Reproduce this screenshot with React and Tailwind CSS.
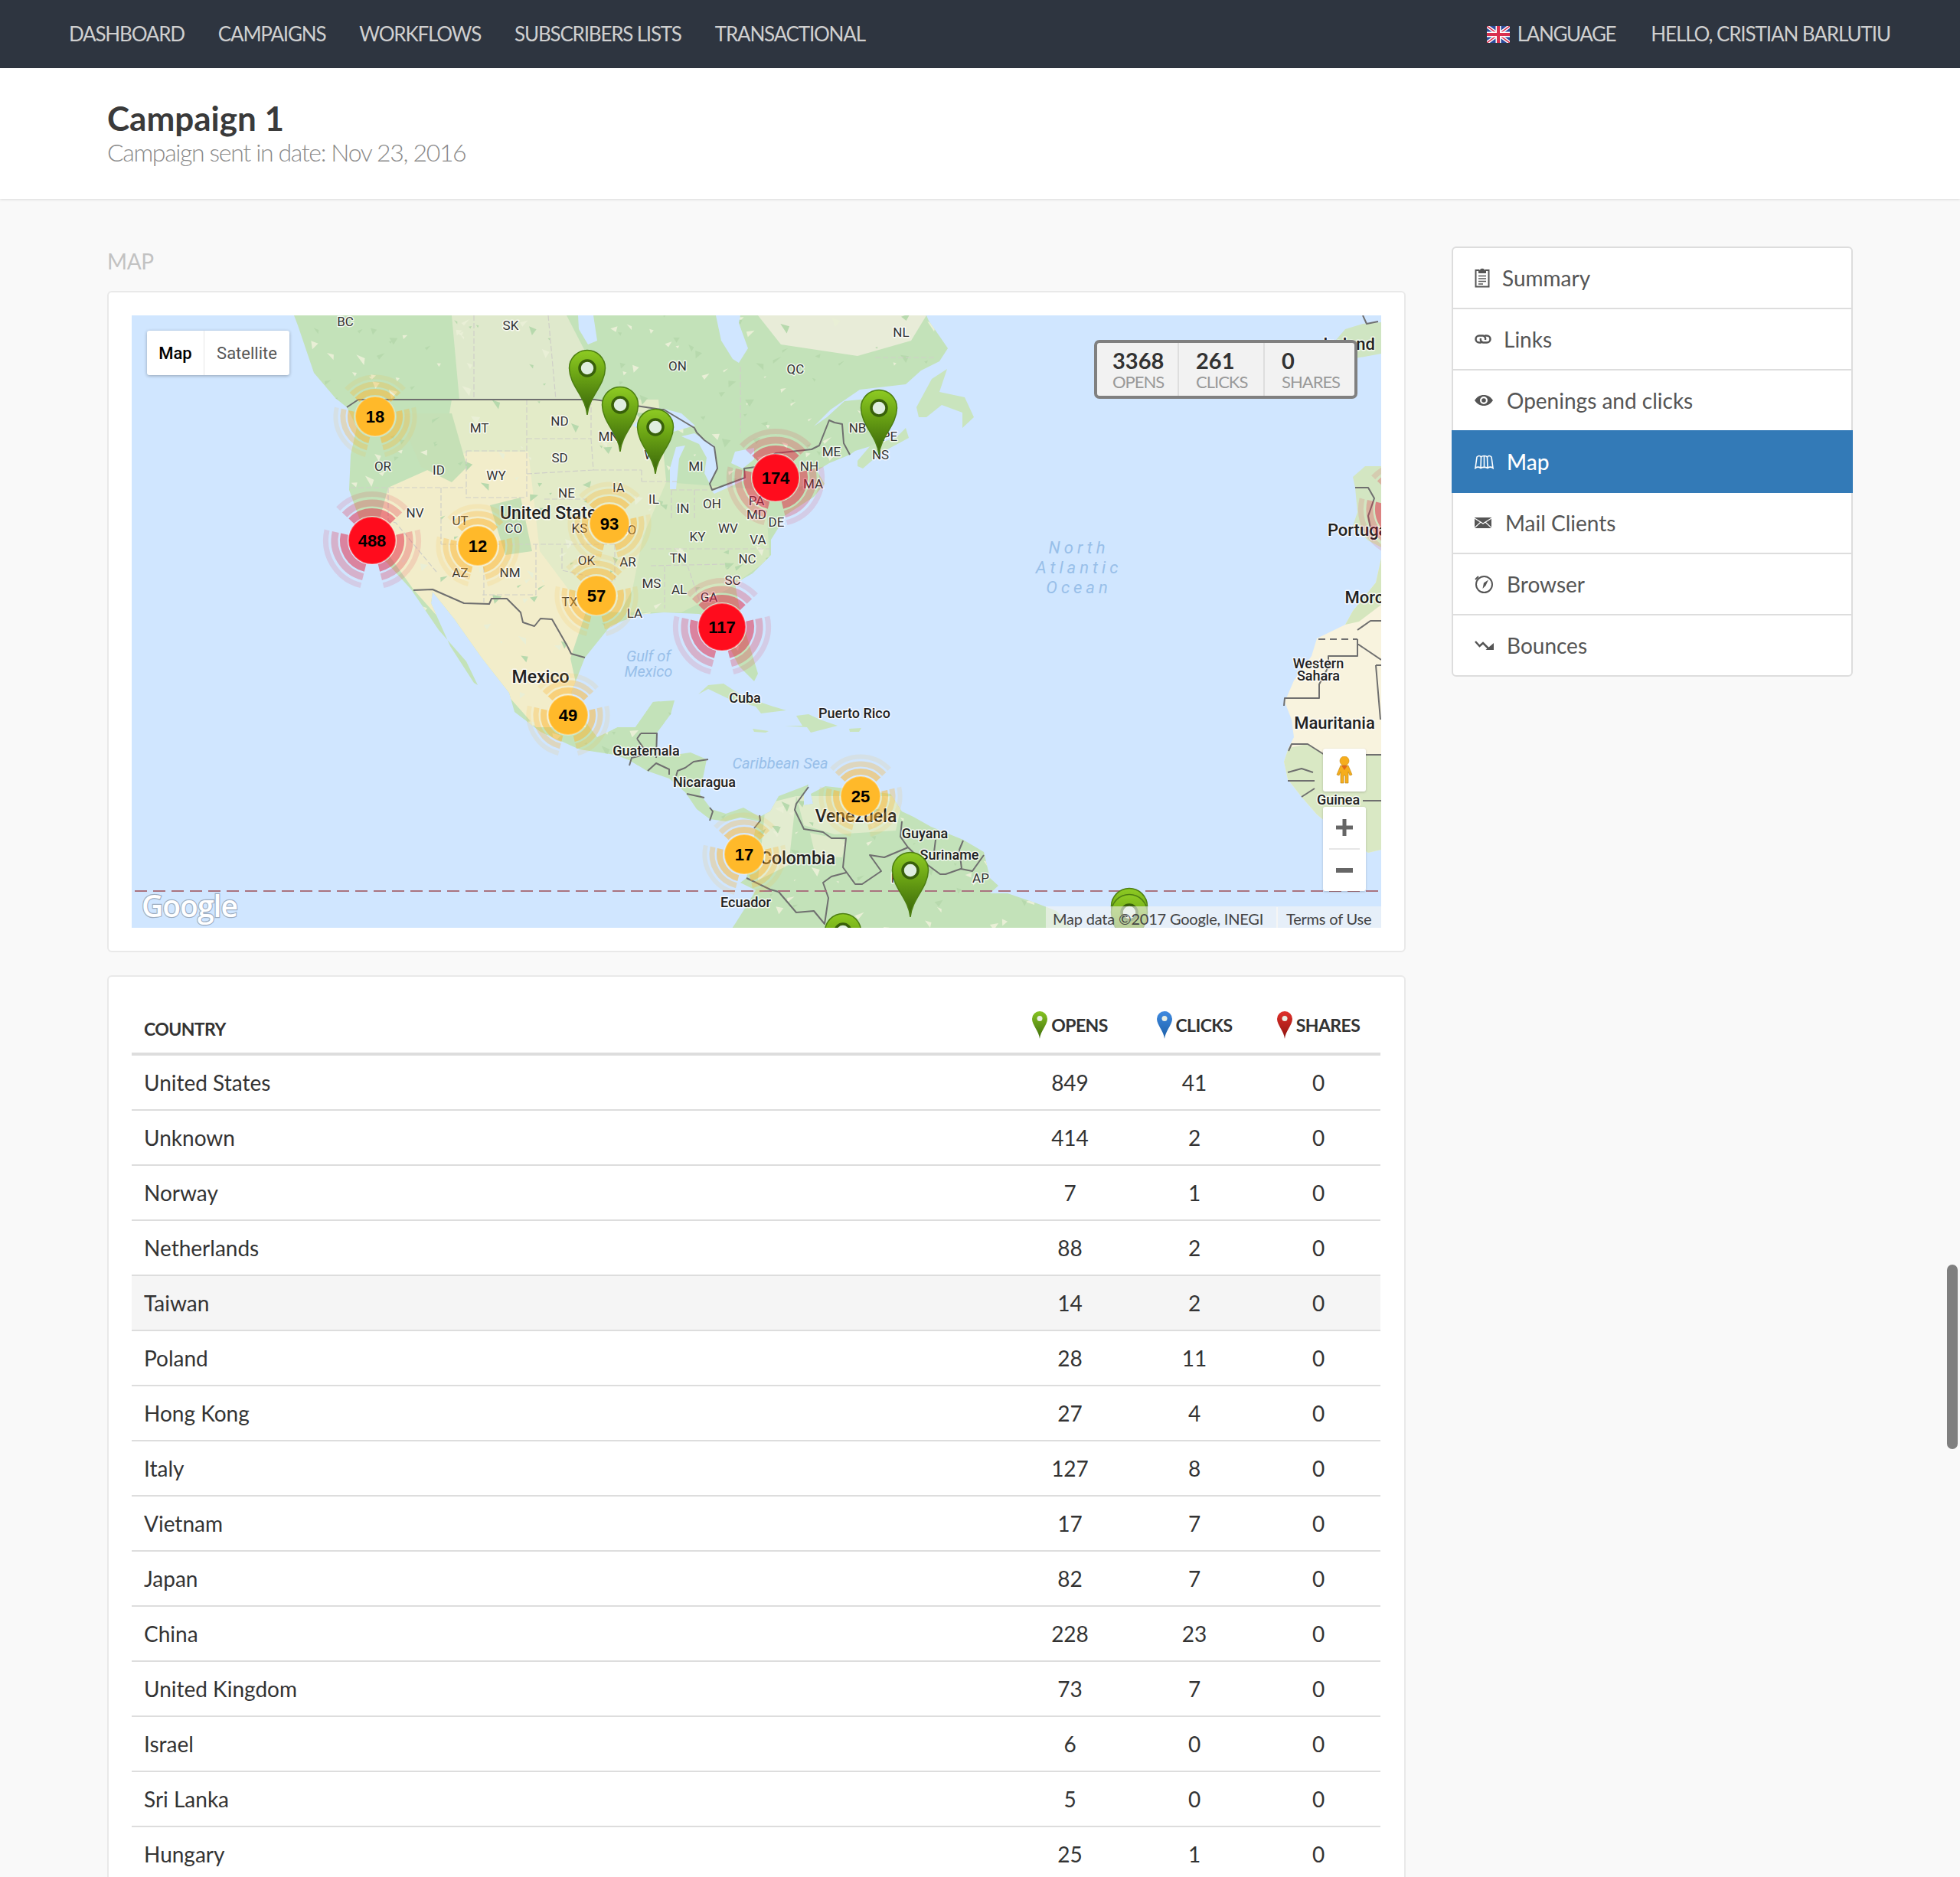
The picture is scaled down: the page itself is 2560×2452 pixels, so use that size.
const NAV = ["DASHBOARD", "CAMPAIGNS", "WORKFLOWS", "SUBSCRIBERS LISTS", "TRANSACTIONAL"]

const ROWS = [
  ["United States", 849, 41, 0],
  ["Unknown", 414, 2, 0],
  ["Norway", 7, 1, 0],
  ["Netherlands", 88, 2, 0],
  ["Taiwan", 14, 2, 0],
  ["Poland", 28, 11, 0],
  ["Hong Kong", 27, 4, 0],
  ["Italy", 127, 8, 0],
  ["Vietnam", 17, 7, 0],
  ["Japan", 82, 7, 0],
  ["China", 228, 23, 0],
  ["United Kingdom", 73, 7, 0],
  ["Israel", 6, 0, 0],
  ["Sri Lanka", 5, 0, 0],
  ["Hungary", 25, 1, 0],
]

// map shapes are in page pixels, the svg viewBox starts at the map's corner
const LAND =
  "M384 412 389 425 410 487 438 520 453 532 466 558 458 594 456 640 476 696 497 726 537 770 573 823 609 864 624 895 619 892 588 844 563 788 565 773 593 808 629 859 665 905 672 930 706 956 757 979 803 986 822 993 845 1007 874 1017 895 1035 910 1057 927 1070 948 1073 967 1068 992 1073 987 1080 982 1110 975 1147 967 1153 987 1163 979 1177 960 1207 956 1213 1400 1213 1380 1190 1354 1180 1316 1167 1293 1167 1304 1157 1293 1147 1285 1113 1258 1097 1216 1080 1193 1067 1178 1060 1163 1037 1105 1030 1078 1027 1059 1037 1062 1050 1050 1052 1050 1036 1056 1025 1017 1040 1006 1060 992 1067 971 1055 948 1063 929 1057 914 1037 923 992 902 983 868 988 858 983 858 957 876 933 881 915 853 917 837 940 830 950 807 950 780 963 767 946 746 905 764 859 797 818 833 803 867 800 913 802 930 810 950 840 965 870 985 890 990 880 975 830 965 790 960 762 983 749 1007 725 1007 705 1017 689 1023 675 1043 662 1063 649 1077 632 1067 615 1083 605 1110 594 1117 589 1150 579 1160 559 1170 535 1143 520 1103 524 1080 545 1063 557 1085 535 1123 509 1183 502 1203 484 1227 472 1238 455 1227 439 1213 419 1210 412Z"
const ISLANDS = [
  "M1120 609 1127 612 1150 592 1187 572 1183 559 1170 572 1137 582 1120 602Z",
  "M1197 532 1217 495 1237 482 1227 512 1260 519 1272 545 1257 559 1257 539 1230 529 1210 545 1200 545Z",
  "M912 907 925 895 945 893 971 910 1010 923 1027 928 994 932 987 923 952 913 925 900Z",
  "M1040 935 1056 933 1071 940 1094 948 1059 957 1054 950 1025 948 1048 948Z",
  "M983 952 1004 955 1000 957 985 956Z",
  "M1109 952 1125 951 1122 956 1110 956Z",
]
const AFRICA =
  "M1804 729 1797 761 1767 798 1757 816 1720 834 1713 857 1690 889 1678 917 1687 940 1690 963 1683 977 1677 995 1682 1018 1700 1041 1720 1064 1753 1091 1787 1114 1804 1110Z"
const IBERIA = "M1767 623 1783 609 1804 609 1804 715 1787 706 1767 687 1773 669 1770 637Z"
const IRELAND = "M1757 430 1780 423 1804 421 1804 462 1760 470 1740 450Z"
const WATER = [
  "M935 412 942 445 957 469 965 474 977 455 965 422 967 412Z",
  "M755 412 775 412 780 445 768 450 756 430Z",
  "M826 556 850 533 867 534 890 540 908 556 893 560 873 566 850 567Z",
  "M883 584 895 582 887 599 883 639 875 639 875 612Z",
  "M907 566 933 582 937 612 927 632 920 618 923 598 913 580 890 570Z",
  "M930 642 973 622 975 626 933 645Z",
  "M960 590 985 585 985 600 970 612 955 605Z",
]
const PATCHES = [
  ["#dfe9cc", "M590 412 740 412 770 470 760 522 600 522Z"],
  ["#e8ecd8", "M990 412 1210 412 1190 445 1120 465 1020 450Z"],
  ["#e3ebc8", "M590 522 860 522 875 680 810 800 640 790 560 700Z"],
  ["#f2edca", "M507 637 612 590 690 590 705 720 765 800 745 860 765 950 700 950 620 860 540 770 490 700Z"],
  ["#d3e7bf", "M870 630 1000 640 1005 730 950 770 890 800 820 800 840 700Z"],
  ["#c5e0b6", "M520 540 590 540 610 610 590 630 550 610Z"],
  ["#c5e0b6", "M640 660 680 650 695 720 660 725Z"],
  ["#c3e2b9", "M800 950 860 910 880 1000 820 1000Z"],
  ["#dfebcb", "M1040 1040 1180 1040 1170 1085 1090 1090 1050 1078Z"],
  ["#dfeaca", "M1058 1088 1105 1098 1100 1120 1065 1118Z"],
  ["#e3ecd0", "M1000 1050 1040 1040 1030 1130 990 1150Z"],
]
const BORDERS = [
  "M453 532 468 522H777L864 535 867 535 907 559 910 565 920 575 933 584 937 612 927 632 930 640 973 624 972 612 987 610 1013 592 1060 587 1070 582 1083 549 1090 552 1100 554 1102 579 1110 594",
  "M540 771 565 770 606 788 639 789 642 782 662 782 680 800 683 813 698 818 706 808 721 809 741 844 746 854 764 859",
  "M1056 1028 1040 1050 1038 1058 1050 1083 1075 1087 1086 1095 1105 1095 1101 1133 1117 1155 1126 1155 1151 1138 1136 1117 1155 1120 1186 1107 1176 1093 1178 1073",
  "M1186 1107 1205 1125 1228 1142 1235 1142 1255 1135 1270 1138 1285 1117",
  "M1222 1097 1220 1113M1258 1098 1253 1110 1256 1135",
  "M975 1147 1006 1162 1017 1165 1040 1192 1063 1190 1077 1207 1082 1173 1075 1153 1086 1145 1105 1140",
  "M837 958 858 958 857 990M832 965 837 958M832 965 846 985 825 990 822 1000M846 1007 857 997 874 1005 874 1012",
  "M925 992 906 995 895 1003 885 1007 883 1014M897 1037 920 1042M927 1055 931 1060 927 1072M992 1065 993 1072 985 1082",
  "M1773 823 1790 811 1804 811M1773 835V857H1735V871L1723 894V912H1678L1677 922M1773 841 1804 862M1797 869H1804M1797 869 1803 940",
  "M1683 981 1687 972H1708L1730 986H1804M1682 1009 1700 1004 1715 1009M1682 1020H1717M1700 1041 1717 1030M1780 1046 1804 1046",
  "M1770 637 1787 637 1795 651 1787 674 1793 706",
  "M1780 412 1785 423 1800 420",
]
const STATES = [
  "M619 412V522M716 412 726 522M967 479V569M1143 467H1223",
  "M688 522V650M688 573H772M688 619 775 614M609 589H688M609 589V650H688M711 652H767",
  "M576 711H803M632 711V787M576 637V711M458 637H609M507 637V680L517 683 570 747",
  "M700 711V777L630 777M734 716V745L800 760M775 614H838M838 629H884M838 614V629",
  "M877 640V680M907 640V679M877 640H925M850 717H1010M868 740V795M898 739 915 789M850 739 947 737",
  "M772 522V573M772 573 775 614M803 711V760",
]

const STATE_LABELS = [
  ["BC", 451, 420], ["SK", 667, 425], ["ON", 885, 478], ["MT", 626, 559], ["ND", 731, 550], ["MN", 795, 570],
  ["SD", 731, 598], ["WI", 851, 594], ["OR", 500, 609], ["ID", 573, 614], ["WY", 648, 621], ["MI", 909, 609],
  ["NE", 740, 644], ["IA", 808, 637], ["IL", 854, 652], ["IN", 892, 664], ["OH", 930, 658], ["NV", 542, 670],
  ["UT", 601, 680], ["CO", 671, 690], ["KS", 757, 690], ["MO", 818, 692], ["KY", 911, 701], ["WV", 951, 690],
  ["VA", 990, 705], ["OK", 766, 732], ["AR", 820, 734], ["TN", 886, 729], ["NC", 976, 730], ["AZ", 601, 748],
  ["NM", 666, 748], ["MS", 851, 762], ["AL", 887, 770], ["SC", 957, 758], ["GA", 926, 780], ["TX", 744, 786],
  ["LA", 829, 801], ["NL", 1177, 434], ["QC", 1039, 482], ["NB", 1120, 559], ["PE", 1162, 570], ["NS", 1150, 594],
  ["ME", 1086, 590], ["NH", 1057, 609], ["MA", 1062, 632], ["PA", 988, 654], ["MD", 988, 672], ["DE", 1014, 682],
  ["AP", 1281, 1147], ["PA", 1174, 1147],
]
const COUNTRY_LABELS = [
  ["Mexico", 706, 884, 23], ["Guatemala", 844, 981, 18], ["Nicaragua", 920, 1022, 18], ["Cuba", 973, 912, 18],
  ["Puerto Rico", 1116, 932, 18], ["Venezuela", 1118, 1066, 23], ["Guyana", 1208, 1089, 18], ["Suriname", 1240, 1117, 18],
  ["Colombia", 1042, 1121, 23], ["Ecuador", 974, 1179, 18], ["Western", 1722, 867, 18], ["Sahara", 1722, 883, 18],
  ["Mauritania", 1743, 944, 22], ["Guinea", 1748, 1045, 18], ["United States", 722, 670, 23],
  ["Portugal", 1776, 692, 22], ["Morocco", 1800, 780, 22], ["Ireland", 1762, 449, 22],
]
const WATER_LABELS = [
  ["Gulf of", 847, 857, 20, 0], ["Mexico", 847, 877, 20, 0], ["Caribbean Sea", 1019, 997, 20, 0],
  ["North", 1409, 716, 22, 5], ["Atlantic", 1409, 742, 22, 5], ["Ocean", 1409, 768, 22, 5],
]

const CLUSTERS = [
  ["18", 490, 544], ["488", 486, 706], ["12", 624, 713], ["93", 796, 684], ["57", 779, 778],
  ["49", 742, 934], ["174", 1013, 624], ["117", 943, 819], ["25", 1124, 1040], ["17", 972, 1116],
]
const BIG = ["488", "174", "117"]

const PINS = [[1475, 1245], [1475, 1253], [767, 542], [810, 590], [856, 619], [1148, 594], [1189, 1198], [1101, 1278]]

// a little terrain noise, clipped to the land shapes
function makeSpecks() {
  let seed = 7
  const next = () => {
    seed = (seed * 16807) % 2147483647
    return seed / 2147483647
  }
  const out = []
  for (let i = 0; i < 700; i++) {
    const x = 400 + next() * 1000
    const y = 412 + next() * 800
    const s = 3 + next() * 9
    const pale = next() > 0.45
    out.push({
      d: `M${x} ${y} l${s} ${next() * s - s / 2} l${-next() * s} ${s * 0.8}Z`,
      fill: pale ? "#e9efd6" : "#b7d9ad",
    })
  }
  return out
}
const SPECKS = makeSpecks()

function polar(cx, cy, r, deg) {
  const a = (deg * Math.PI) / 180
  return [cx + r * Math.cos(a), cy + r * Math.sin(a)]
}

function arc(cx, cy, r, a0, a1) {
  const [x0, y0] = polar(cx, cy, r, a0)
  const [x1, y1] = polar(cx, cy, r, a1)
  return `M${x0} ${y0} A${r} ${r} 0 0 1 ${x1} ${y1}`
}

function Rings({ x, y, big }) {
  const sets = big
    ? [[37, 10, 0.5], [49, 9, 0.27], [60.5, 7, 0.13]]
    : [[32, 8, 0.5], [42, 7, 0.3], [51.5, 6, 0.12]]
  const color = big ? "#e4203f" : "#fdb42a"
  return (
    <g fill="none" stroke={color}>
      {sets.map(([r, w, o]) =>
        [[223, 317], [104, 193], [-13, 76]].map(([a0, a1]) => (
          <path key={`${r}${a0}`} d={arc(x, y, r, a0, a1)} strokeWidth={w} strokeOpacity={o} />
        ))
      )}
    </g>
  )
}

function Cluster({ label, x, y }) {
  const big = BIG.includes(label)
  return (
    <g>
      <Rings x={x} y={y} big={big} />
      <circle cx={x} cy={y} r={big ? 31 : 26} fill={big ? "#ff0c1d" : "#ffb92a"} stroke="#fff" strokeOpacity="0.3" strokeWidth="2" />
      <text x={x} y={y + 8} textAnchor="middle" fontFamily="Liberation Sans, sans-serif" fontWeight="700" fontSize="22" fill="#000">
        {label}
      </text>
    </g>
  )
}

function MapPin({ x, y }) {
  return (
    <g transform={`translate(${x} ${y})`}>
      <path
        d="M0 0C-2-24-23-38-23.500-61A23.500 23.500 0 1 1 23.500-61C23-38 2-24 0 0Z"
        fill="url(#pinGreen)"
        stroke="#4d7f12"
        strokeWidth="1.5"
      />
      <circle cx="0" cy="-61" r="10" fill="#dfeee0" stroke="#38600a" strokeWidth="3.5" />
    </g>
  )
}

function WorldMap() {
  const halo = { stroke: "#fff", strokeOpacity: 0.75, strokeWidth: 3, paintOrder: "stroke", strokeLinejoin: "round" }
  return (
    <svg viewBox="172 412 1632 800" className="block w-[1632px] h-[800px] bg-[#d0e6ff]">
      <defs>
        <linearGradient id="pinGreen" x1="0" y1="0" x2="0" y2="1">
          <stop offset="0" stopColor="#8ecb23" />
          <stop offset="0.4" stopColor="#6aa314" />
          <stop offset="1" stopColor="#37620a" />
        </linearGradient>
        <clipPath id="landClip">
          <path d={LAND} />
        </clipPath>
      </defs>

      <path d={LAND} fill="#c3e2b9" />
      {ISLANDS.map((d, i) => (
        <path key={i} d={d} fill="#c9e4bd" />
      ))}
      <path d={AFRICA} fill="#f8f3de" />
      <path d="M1683 977 1708 972 1730 986 1804 985V1110L1787 1114 1753 1091 1720 1064 1700 1041 1682 1018 1677 995Z" fill="#d9e8c4" />
      <path d="M1804 729 1797 761 1767 798 1757 816 1775 812 1804 790Z" fill="#d5e6be" />
      <path d={IBERIA} fill="#d3e6c2" />
      <path d={IRELAND} fill="#cfe5c2" />

      <g clipPath="url(#landClip)">
        {PATCHES.map(([fill, d], i) => (
          <path key={i} d={d} fill={fill} />
        ))}
        {SPECKS.map((s, i) => (
          <path key={i} d={s.d} fill={s.fill} />
        ))}
      </g>
      {WATER.map((d, i) => (
        <path key={i} d={d} fill="#d0e6ff" />
      ))}

      <path d={STATES.join("")} fill="none" stroke="#cfcfc8" strokeWidth="1.2" strokeDasharray="7 3" />
      <path d={BORDERS.join("")} fill="none" stroke="#6f6f6f" strokeWidth="2" strokeLinejoin="round" />
      <path d="M1722 835H1773" fill="none" stroke="#6f6f6f" strokeWidth="2" strokeDasharray="9 6" />
      <path d="M176 1164H1804" fill="none" stroke="#a9737f" strokeWidth="2" strokeDasharray="16 8" />

      <g fontFamily="Roboto, sans-serif" textAnchor="middle">
        {STATE_LABELS.map(([t, x, y], i) => (
          <text key={i} x={x} y={y + 6} fontSize="17" fill="#333" {...halo}>
            {t}
          </text>
        ))}
        {COUNTRY_LABELS.map(([t, x, y, size], i) => (
          <text key={i} x={x} y={y + size * 0.36} fontSize={size} fontWeight="500" fill="#222" {...halo}>
            {t}
          </text>
        ))}
        {WATER_LABELS.map(([t, x, y, size, sp], i) => (
          <text key={i} x={x} y={y + 7} fontSize={size} fontStyle="italic" letterSpacing={sp} fill="#98bfe9">
            {t}
          </text>
        ))}
      </g>

      <Rings x={1838} y={665} big />
      {CLUSTERS.map(([label, x, y]) => (
        <Cluster key={label} label={label} x={x} y={y} />
      ))}
      {PINS.map(([x, y], i) => (
        <MapPin key={i} x={x} y={y} />
      ))}

      <text
        x="185"
        y="1198"
        fontFamily="Open Sans, sans-serif"
        fontSize="39"
        fontWeight="600"
        fill="#fff"
        stroke="#000"
        strokeOpacity="0.25"
        strokeWidth="2.5"
        paintOrder="stroke"
        letterSpacing="-1"
      >
        Google
      </text>
    </svg>
  )
}

function StatCell({ value, label, className }) {
  return (
    <div className={className}>
      <div className="text-[29px] leading-[32px] font-bold text-[#333]">{value}</div>
      <div className="text-[22px] leading-[24px] text-[#999] tracking-[-1px]">{label}</div>
    </div>
  )
}

function MapPanel() {
  return (
    <div className="relative w-[1632px] h-[800px] overflow-hidden">
      <WorldMap />
      <div className="absolute left-5 top-5 flex w-[186px] h-[58px] bg-white rounded-[3px] shadow-[0_1px_4px_rgba(0,0,0,0.3)] font-[Roboto,sans-serif] text-[22px]">
        <div className="w-[75px] flex items-center justify-center font-medium text-black border-r border-[#e6e6e6]">Map</div>
        <div className="flex-1 flex items-center justify-center text-[#565656]">Satellite</div>
      </div>
      <div className="absolute left-[1257px] top-8 w-[344px] h-[77px] flex bg-[#f2f2f2] border-4 border-[#808080] rounded-[7px]">
        <StatCell value="3368" label="OPENS" className="w-[107px] pl-5 pt-[7px] border-r-2 border-[#dedede]" />
        <StatCell value="261" label="CLICKS" className="w-[112px] pl-[22px] pt-[7px] border-r-2 border-[#dedede]" />
        <StatCell value="0" label="SHARES" className="flex-1 pl-[22px] pt-[7px]" />
      </div>
      <div className="absolute left-[1556px] top-[566px] w-14 h-14 bg-white rounded-[3px] flex items-center justify-center shadow-[0_1px_3px_rgba(0,0,0,0.2)]">
        <svg width="22" height="36" viewBox="0 0 22 36">
          <circle cx="11" cy="6" r="6" fill="#f6ad1c" stroke="#c98a10" strokeWidth="0.6" />
          <path d="M6 12H16L21 24 18 25 16 20V35H12V25H10V35H6V20L4 25 1 24Z" fill="#f6ad1c" stroke="#b8820e" strokeWidth="0.6" />
          <path d="M7 12H15L11 18Z" fill="#e06a1a" />
        </svg>
      </div>
      <div className="absolute left-[1556px] top-[642px] w-14 h-[110px] bg-white rounded-[3px] flex flex-col items-center shadow-[0_1px_3px_rgba(0,0,0,0.2)]">
        <div className="h-[54px] flex items-center justify-center">
          <svg width="22" height="22" viewBox="0 0 22 22"><path d="M8.5 0h5v8.500h8.500v5h-8.500v8.500h-5v-8.500h-8.500v-5h8.500z" fill="#666" /></svg>
        </div>
        <div className="w-10 h-[2px] bg-[#e6e6e6]" />
        <div className="flex-1 flex items-center justify-center">
          <svg width="22" height="6" viewBox="0 0 22 6"><rect width="22" height="6" fill="#666" /></svg>
        </div>
      </div>
      <div className="absolute right-0 bottom-0 w-[438px] h-[28px] pt-[3px] bg-[#f5f5f5]/60 flex items-center text-[20px] text-[#444] tracking-[-0.2px]">
        <span className="pl-[9px] w-[301px] whitespace-nowrap">Map data ©2017 Google, INEGI</span>
        <span className="pl-[11px] whitespace-nowrap border-l-2 border-[#f5f5f5]">Terms of Use</span>
      </div>
    </div>
  )
}

function SmallPin({ top, bottom }) {
  const id = `pin${top.slice(1)}`
  return (
    <svg width="20" height="36" viewBox="0 0 20 36" className="shrink-0">
      <defs>
        <linearGradient id={id} x1="0" y1="0" x2="0" y2="1">
          <stop offset="0" stopColor={top} />
          <stop offset="1" stopColor={bottom} />
        </linearGradient>
      </defs>
      <path d="M10 36C9 26 0 18 0 10A10 10 0 1 1 20 10C20 18 11 26 10 36Z" fill={`url(#${id})`} />
      <circle cx="10" cy="9.500" r="3.500" fill="#e9efe5" />
    </svg>
  )
}

function HeadCell({ label, top, bottom }) {
  return (
    <th className="align-bottom pb-[18px] font-bold">
      <div className="flex items-center justify-center gap-[5px] text-[23px] leading-[36px] text-[#333] tracking-[-0.6px]">
        <SmallPin top={top} bottom={bottom} />
        {label}
      </div>
    </th>
  )
}

function CountryTable() {
  return (
    <table className="w-[1631px] table-fixed border-collapse text-[#333]">
      <colgroup>
        <col />
        <col className="w-[163px]" />
        <col className="w-[162px]" />
        <col className="w-[162px]" />
      </colgroup>
      <thead>
        <tr className="h-[71px] border-b-4 border-[#ddd]">
          <th className="align-bottom pb-[16px] pl-4 text-left font-bold text-[23px] leading-[30px] tracking-[-0.6px]">COUNTRY</th>
          <HeadCell label="OPENS" top="#86c322" bottom="#3f6d0b" />
          <HeadCell label="CLICKS" top="#3f8ae0" bottom="#1c5fa8" />
          <HeadCell label="SHARES" top="#e0302a" bottom="#8e130f" />
        </tr>
      </thead>
      <tbody className="text-[28px]">
        {ROWS.map(([name, opens, clicks, shares], i) => (
          <tr
            key={name}
            className={`${i === 0 ? "h-[73px]" : "h-[72px]"} border-b-2 border-[#ddd] ${name === "Taiwan" ? "bg-[#f5f5f5]" : ""}`}
          >
            <td className="pl-4">{name}</td>
            <td className="text-center">{opens}</td>
            <td className="text-center">{clicks}</td>
            <td className="text-center">{shares}</td>
          </tr>
        ))}
      </tbody>
    </table>
  )
}

function Flag() {
  return (
    <svg width="30" height="22" viewBox="0 0 30 22" className="mr-[10px]">
      <rect width="30" height="22" fill="#2b4a9b" />
      <path d="M0 0 30 22M30 0 0 22" stroke="#fff" strokeWidth="4.500" />
      <path d="M0 0 30 22M30 0 0 22" stroke="#d9304f" strokeWidth="1.500" />
      <path d="M15 0V22M0 11H30" stroke="#fff" strokeWidth="7" />
      <path d="M15 0V22M0 11H30" stroke="#d9304f" strokeWidth="4" />
    </svg>
  )
}

const iconProps = { fill: "none", stroke: "currentColor", strokeWidth: 2 }
const SIDE_ITEMS = [
  {
    label: "Summary",
    gap: "w-[36px]",
    icon: (
      <svg width="20" height="26" viewBox="0 0 20 26" {...iconProps}>
        <path d="M6 3H1.500V24.500H18.500V3H14" />
        <path d="M6 6V3.500H8C8 1 12 1 12 3.500H14V6Z" fill="currentColor" />
        <path d="M5 10.500H15M5 14H15M5 17.500H15M5 21H11" strokeWidth="1.700" />
      </svg>
    ),
  },
  {
    label: "Links",
    gap: "w-[38px]",
    icon: (
      <svg width="22" height="14" viewBox="0 0 22 14" {...iconProps} strokeWidth="2.500">
        <path d="M9 11.500H6A4.500 4.500 0 0 1 6 2.500H11A4.500 4.500 0 0 1 14 8" />
        <path d="M13 2.500H16A4.500 4.500 0 0 1 16 11.500H11A4.500 4.500 0 0 1 8 6" />
      </svg>
    ),
  },
  {
    label: "Openings and clicks",
    gap: "w-[42px]",
    icon: (
      <svg width="24" height="14" viewBox="0 0 24 14">
        <path fillRule="evenodd" fill="currentColor" d="M0 7C3 2.500 7 0 12 0S21 2.500 24 7C21 11.500 17 14 12 14S3 11.500 0 7ZM12 2A5 5 0 1 0 12 12 5 5 0 0 0 12 2Z" />
        <circle cx="12" cy="7" r="2.800" fill="currentColor" />
      </svg>
    ),
  },
  {
    label: "Map",
    gap: "w-[42px]",
    icon: (
      <svg width="25" height="20" viewBox="0 0 25 20" {...iconProps} strokeWidth="1.600">
        <path d="M1 18.500 3 4C5 2 7 2 8.500 4 10 2 15 2 16.500 4 18 2 20 2 22 4L24 18.500C22 17 19 17 17 18.500 15 17 10 17 8 18.500 6 17 3 17 1 18.500Z" />
        <path d="M8.500 4 8 18.500M16.500 4 17 18.500M12.500 3V18" />
      </svg>
    ),
  },
  {
    label: "Mail Clients",
    gap: "w-[40px]",
    icon: (
      <svg width="22" height="14" viewBox="0 0 22 14">
        <rect width="22" height="14" fill="currentColor" />
        <path d="M0 1 11 8 22 1M0 13.500 8 6M22 13.500 14 6" fill="none" stroke="#fff" strokeWidth="1.200" />
      </svg>
    ),
  },
  {
    label: "Browser",
    gap: "w-[42px]",
    icon: (
      <svg width="25" height="24" viewBox="0 0 25 24" {...iconProps}>
        <circle cx="12.500" cy="12.500" r="10.500" />
        <path d="M1 6 5 2" />
        <path d="M18 6.500 14.500 14 10.500 18 12 10.500Z" fill="currentColor" stroke="none" />
      </svg>
    ),
  },
  {
    label: "Bounces",
    gap: "w-[42px]",
    icon: (
      <svg width="25" height="15" viewBox="0 0 25 15">
        <path d="M1 2 6.500 8 11 4 18 11" fill="none" stroke="currentColor" strokeWidth="2.500" />
        <path d="M14.500 13H25V4Z" fill="currentColor" />
      </svg>
    ),
  },
]

function Sidebar() {
  return (
    <aside className="w-[524px] mt-[62px] self-start border-2 border-[#ddd] rounded-[6px] bg-white flex flex-col">
      {SIDE_ITEMS.map((item, i) => {
        const active = item.label === "Map"
        const last = i === SIDE_ITEMS.length - 1
        return (
          <a
            key={item.label}
            className={`flex items-center text-[28px] ${
              active
                ? "h-[82px] -mt-[2px] bg-[#337ab7] text-white font-medium -mx-[2px] pl-[30px]"
                : `${last ? "h-[78px]" : "h-[80px] border-b-2 border-[#ddd]"} pl-[28px] text-[#555]`
            }`}
          >
            <span className={`${item.gap} flex items-center shrink-0`}>{item.icon}</span>
            {item.label}
          </a>
        )
      })}
    </aside>
  )
}

export default function App() {
  return (
    <div className="relative h-[2452px] w-[2560px] overflow-hidden bg-[#f9f9f9] font-[Lato,sans-serif]">
      <nav className="h-[89px] bg-[#2e3540] flex items-center justify-between pl-[90px] pr-[91px] text-[26px] text-[#d0d0d0]">
        <div className="flex gap-[44px] tracking-[-1.2px]">
          {NAV.map((n) => (
            <a key={n}>{n}</a>
          ))}
        </div>
        <div className="flex items-center gap-[46px] tracking-[-1.1px]">
          <a className="flex items-center tracking-[-1.4px]">
            <Flag />
            LANGUAGE
          </a>
          <a>HELLO, CRISTIAN BARLUTIU</a>
        </div>
      </nav>

      <header className="h-[171px] bg-white pl-[140px] pt-[38px] shadow-[0_1px_3px_rgba(0,0,0,0.12)]">
        <h1 className="text-[44px] leading-[54px] font-bold text-[#3a3a3a]">Campaign 1</h1>
        <p className="text-[32px] leading-[36px] font-light text-[#8a8a8a] tracking-[-1.35px]">Campaign sent in date: Nov 23, 2016</p>
      </header>

      <main className="flex gap-[60px] px-[140px]">
        <div className="w-[1696px] shrink-0">
          <h2 className="pt-[64px] h-[120px] text-[28px] leading-[34px] text-[#c2c2c2] tracking-[-0.3px]">MAP</h2>
          <section className="bg-white border-2 border-[#e9e9e9] rounded-[6px] p-[30px]">
            <MapPanel />
          </section>
          <section className="mt-[30px] bg-white border-2 border-[#e9e9e9] rounded-[6px] p-[30px]">
            <CountryTable />
          </section>
        </div>
        <Sidebar />
      </main>

      <div className="absolute left-[2543px] top-[1652px] w-[14px] h-[241px] rounded-full bg-[#7f7f7f]" />
    </div>
  )
}
